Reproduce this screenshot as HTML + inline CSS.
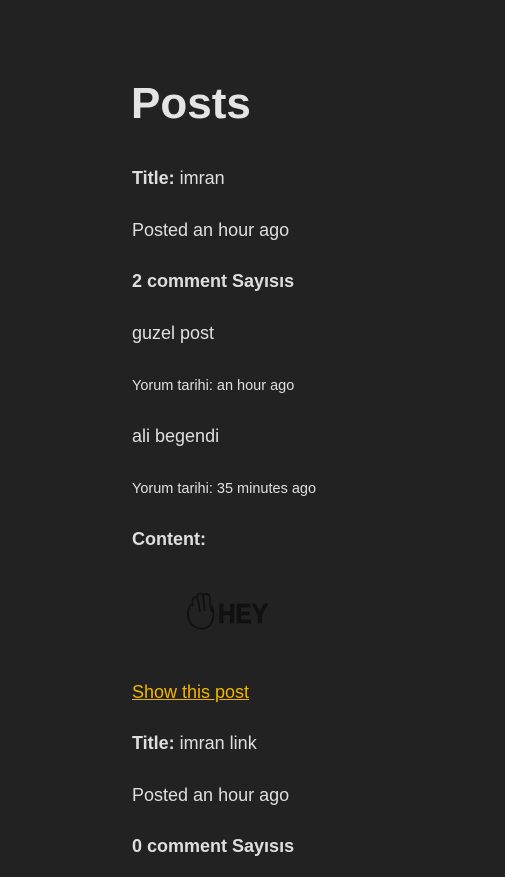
<!DOCTYPE html>
<html><head><style>
html,body{margin:0;background:#222;width:505px;height:877px;overflow:hidden}
body{font-family:"Liberation Sans",sans-serif;color:#dedede;position:relative}
.t{position:absolute;left:132px;font-size:18px;line-height:20px;white-space:nowrap}
.s{font-size:14.5px}
b{font-weight:bold}
h1{position:absolute;left:131px;top:76px;margin:0;font-size:44px;line-height:56px;font-weight:bold;color:#e4e4e4}
a{color:#f0b400}
</style></head><body>
<h1>Posts</h1>
<div class="t" style="top:168px"><b>Title:</b> imran</div>
<div class="t" style="top:220px">Posted an hour ago</div>
<div class="t" style="top:271px"><b>2 comment Sayısıs</b></div>
<div class="t" style="top:323px">guzel post</div>
<div class="t s" style="top:376px">Yorum tarihi: an hour ago</div>
<div class="t" style="top:426px">ali begendi</div>
<div class="t s" style="top:479px">Yorum tarihi: 35 minutes ago</div>
<div class="t" style="top:529px"><b>Content:</b></div>
<svg style="position:absolute;left:185px;top:592px" width="85" height="40" viewBox="0 0 85 40">
<g fill="none" stroke="#111" stroke-width="1.8">
<path d="M6 12 C1 20 2 30 10 35 C16 38 22 37 25 33 C29 28 29 20 27 14 M8 14 C6 8 9 3 12 6 C14 9 14 16 15 20 M12 6 C12 1 17 0 18 4 C19 9 19 15 20 19 M18 4 C20 0 25 2 25 7 C25 12 26 17 27 20"/>
</g>
<text x="33" y="31" font-family="Liberation Sans" font-weight="bold" font-size="28" fill="#111" stroke="#111" stroke-width="0.8" transform="scale(1,1)" textLength="50" lengthAdjust="spacingAndGlyphs">HEY</text>
</svg>
<div class="t" style="top:682px"><a href="#">Show this post</a></div>
<div class="t" style="top:733px"><b>Title:</b> imran link</div>
<div class="t" style="top:785px">Posted an hour ago</div>
<div class="t" style="top:836px"><b>0 comment Sayısıs</b></div>
</body></html>
